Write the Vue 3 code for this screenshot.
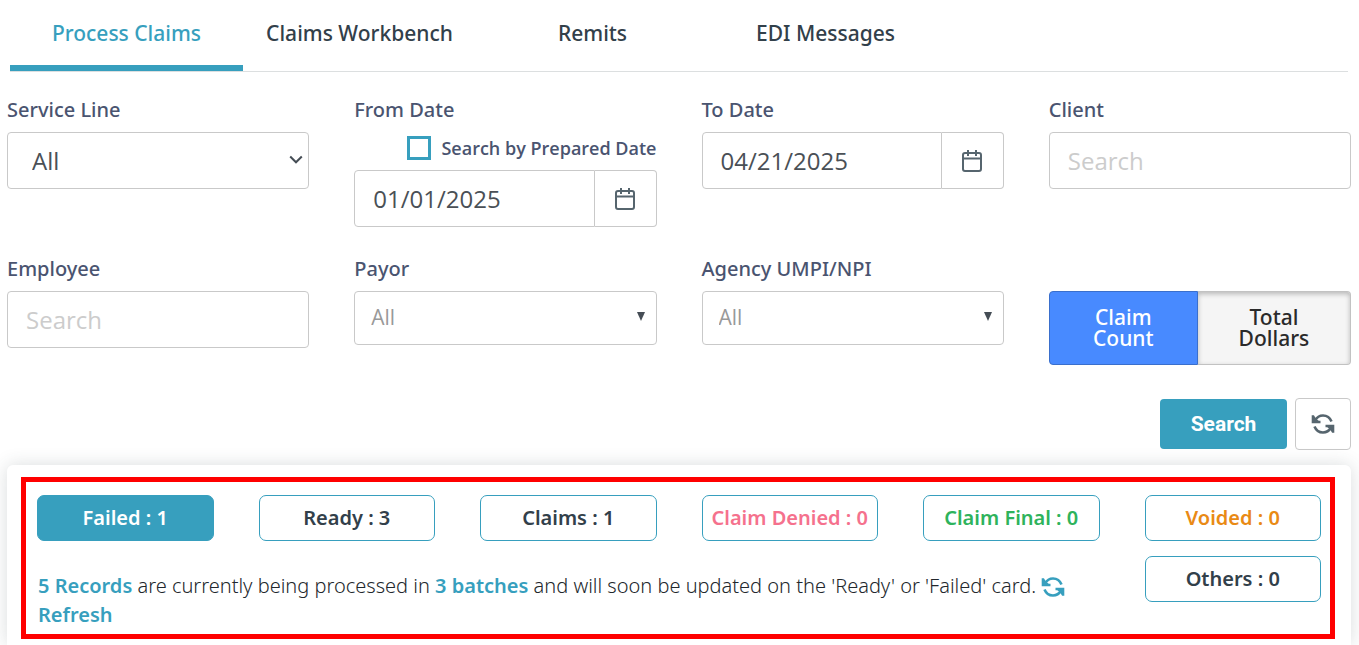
<script setup>
import { ref } from 'vue'

const tabs = ['Process Claims', 'Claims Workbench', 'Remits', 'EDI Messages']
const activeTab = ref('Process Claims')
const serviceLine = ref('All')
const byPrepared = ref(false)
const fromDate = ref('01/01/2025')
const toDate = ref('04/21/2025')
const client = ref('')
const employee = ref('')
const payor = ref('All')
const agency = ref('All')
const mode = ref('count')
const activeCard = ref('Failed')

const cards = [
  { name: 'Failed', count: 1, tone: 'dark' },
  { name: 'Ready', count: 3, tone: 'dark' },
  { name: 'Claims', count: 1, tone: 'dark' },
  { name: 'Claim Denied', count: 0, tone: 'pink' },
  { name: 'Claim Final', count: 0, tone: 'green' },
  { name: 'Voided', count: 0, tone: 'orange' },
]
</script>

<template>
  <div class="page">
    <nav class="tabs">
      <button
        v-for="tab in tabs"
        :key="tab"
        type="button"
        class="tab"
        :class="{ active: tab === activeTab }"
        @click="activeTab = tab"
      >{{ tab }}</button>
    </nav>

    <form class="filters" @submit.prevent>
      <div class="grid">
        <div class="field">
          <label for="service-line">Service Line</label>
          <div class="select-wrap">
            <select id="service-line" v-model="serviceLine" class="control large">
              <option>All</option>
            </select>
            <svg class="chevron" viewBox="0 0 14 10" aria-hidden="true">
              <path d="M1.2 1.5 7 7.3l5.800-5.800" />
            </svg>
          </div>
        </div>

        <div class="field">
          <label for="from-date">From Date</label>
          <div class="check-row">
            <input id="by-prepared" v-model="byPrepared" type="checkbox" class="check" />
            <label for="by-prepared">Search by Prepared Date</label>
          </div>
          <div class="date">
            <input id="from-date" v-model="fromDate" type="text" class="control" />
            <button type="button" class="date-button" aria-label="Pick from date">
              <svg viewBox="0 0 22 24" class="calendar" aria-hidden="true">
                <rect x="2" y="4" width="18" height="18" rx="2" />
                <path d="M2 9.500h18M7 1v6M15 1v6" />
              </svg>
            </button>
          </div>
        </div>

        <div class="field">
          <label for="to-date">To Date</label>
          <div class="date">
            <input id="to-date" v-model="toDate" type="text" class="control" />
            <button type="button" class="date-button" aria-label="Pick to date">
              <svg viewBox="0 0 22 24" class="calendar" aria-hidden="true">
                <rect x="2" y="4" width="18" height="18" rx="2" />
                <path d="M2 9.500h18M7 1v6M15 1v6" />
              </svg>
            </button>
          </div>
        </div>

        <div class="field">
          <label for="client">Client</label>
          <input id="client" v-model="client" type="text" class="control" placeholder="Search" />
        </div>

        <div class="field">
          <label for="employee">Employee</label>
          <input id="employee" v-model="employee" type="text" class="control" placeholder="Search" />
        </div>

        <div class="field">
          <label for="payor">Payor</label>
          <div class="select-wrap">
            <select id="payor" v-model="payor" class="control small">
              <option>All</option>
            </select>
            <svg class="triangle" viewBox="0 0 8 9" aria-hidden="true"><path d="M0 0h8L4 9z" /></svg>
          </div>
        </div>

        <div class="field">
          <label for="agency">Agency UMPI/NPI</label>
          <div class="select-wrap">
            <select id="agency" v-model="agency" class="control small">
              <option>All</option>
            </select>
            <svg class="triangle" viewBox="0 0 8 9" aria-hidden="true"><path d="M0 0h8L4 9z" /></svg>
          </div>
        </div>

        <div class="toggle">
          <button type="button" :class="{ on: mode === 'count' }" @click="mode = 'count'">Claim<br />Count</button>
          <button type="button" :class="{ on: mode === 'dollars' }" @click="mode = 'dollars'">Total<br />Dollars</button>
        </div>
      </div>

      <div class="actions">
        <button type="submit" class="search">Search</button>
        <button type="button" class="reset" aria-label="Reset filters">
          <svg viewBox="0 0 24 22" class="sync" aria-hidden="true">
            <path class="arc" d="M4 7.500C5.800 4.300 8.600 2.500 12 2.500c3.900 0 7 2.300 8.500 6M20 14.500c-1.800 3.200-4.600 5-8 5-3.900 0-7-2.300-8.500-6" />
            <path class="head" d="M.7 2.300h2.200l2.300 3.700 2.600 1.700h1.700v2.600H.7zM23.300 19.700h-2.200l-2.300-3.700-2.600-1.700h-1.700v-2.600h8.800z" />
          </svg>
        </button>
      </div>
    </form>

    <section class="panel">
      <div class="summary">
        <button
          v-for="card in cards"
          :key="card.name"
          type="button"
          class="card"
          :class="[card.tone, { active: card.name === activeCard }]"
          @click="activeCard = card.name"
        >{{ card.name }} : {{ card.count }}</button>

        <p class="message">
          <b>5 Records</b> are currently being processed in <b>3 batches</b> and will soon be updated on
          the 'Ready' or 'Failed' card.
          <a href="#" class="refresh"><svg viewBox="0 0 24 22" class="sync" aria-hidden="true">
            <path class="arc" d="M4 7.500C5.800 4.300 8.600 2.500 12 2.500c3.900 0 7 2.300 8.500 6M20 14.500c-1.800 3.200-4.600 5-8 5-3.900 0-7-2.300-8.500-6" />
            <path class="head" d="M.7 2.300h2.200l2.300 3.700 2.600 1.700h1.700v2.600H.7zM23.300 19.700h-2.200l-2.300-3.700-2.600-1.700h-1.700v-2.600h8.800z" />
          </svg> Refresh</a>
        </p>

        <button type="button" class="card dark" @click="activeCard = 'Others'">Others : 0</button>
      </div>
    </section>
  </div>
</template>

<style>
body {
  background: #fff;
}
</style>

<style scoped>
.page,
.page * {
  box-sizing: border-box;
}

.page {
  display: flex;
  flex-direction: column;
  min-height: 100vh;
  padding: 0 8px 0 7px;
  overflow: hidden;
  font-family: "Open Sans", "Noto Sans", sans-serif;
  color: #32404a;
}

button,
input,
select {
  margin: 0;
  font-family: inherit;
}

button {
  cursor: pointer;
}

.tabs {
  display: flex;
  height: 72px;
  margin: 0 3px;
  border-bottom: 1px solid #dcdfe0;
}

.tab {
  width: 233px;
  padding: 0;
  border: 0;
  border-bottom: 6px solid transparent;
  background: none;
  font-family: "Noto Sans", "Open Sans", sans-serif;
  font-size: 21px;
  font-weight: 500;
  line-height: 28px;
  color: #32404a;
}

.tab.active {
  border-bottom-color: #379fbe;
  color: #379fbe;
}

.filters {
  padding-top: 24px;
}

.grid {
  display: grid;
  grid-template-columns: repeat(4, minmax(0, 1fr));
  column-gap: 45px;
  row-gap: 28px;
}

.field {
  display: flex;
  flex-direction: column;
}

.field label {
  font-family: "Noto Sans", "Open Sans", sans-serif;
  font-size: 20px;
  font-weight: 500;
  line-height: 28px;
  color: #4a5470;
}

.field > label {
  margin-bottom: 8px;
}

.control {
  display: block;
  width: 100%;
  height: 57px;
  padding: 0 18px;
  border: 1px solid #c9c9c9;
  border-radius: 4px;
  outline: 0;
  background: #fff;
  font-size: 24px;
  color: #4a5056;
  appearance: none;
}

.control::placeholder {
  color: #ccc;
  opacity: 1;
}

.control.large {
  padding-left: 24px;
}

.control.small {
  height: 54px;
  padding: 0 16px 3px;
  font-size: 21px;
  color: #999;
}

.select-wrap {
  position: relative;
}

.chevron {
  position: absolute;
  top: 23px;
  right: 6px;
  width: 14px;
  height: 10px;
  fill: none;
  stroke: #454d55;
  stroke-width: 2;
}

.triangle {
  position: absolute;
  top: 21px;
  right: 12px;
  width: 8px;
  height: 9px;
  fill: #454d55;
}

.check-row {
  display: flex;
  justify-content: flex-end;
  align-items: center;
  gap: 10px;
  height: 24px;
  margin: 4px 0 10px;
}

.field .check-row label {
  font-family: "Open Sans", "Noto Sans", sans-serif;
  font-size: 18px;
  font-weight: 600;
}

.check {
  width: 24px;
  height: 24px;
  border: 3px solid #379fbe;
  background: #fff;
  appearance: none;
}

.check:checked {
  background: #379fbe;
}

.date {
  display: flex;
}

.date .control {
  flex: 1;
  min-width: 0;
  border-radius: 4px 0 0 4px;
}

.date-button {
  display: flex;
  align-items: center;
  justify-content: center;
  width: 62px;
  padding: 0;
  border: 1px solid #c9c9c9;
  border-left: 0;
  border-radius: 0 4px 4px 0;
  background: #fff;
}

.calendar {
  width: 22px;
  height: 24px;
  fill: none;
  stroke: #56656e;
  stroke-width: 2;
}

.toggle {
  display: grid;
  grid-template-columns: 149fr 153fr;
  height: 74px;
  margin-top: 36px;
}

.toggle button {
  padding: 0;
  border: 1px solid #c2c2c2;
  border-left: 0;
  border-radius: 0 4px 4px 0;
  background: #f5f5f5;
  box-shadow: inset 0 2px 5px rgba(0, 0, 0, 0.25);
  font-family: "Noto Sans", "Open Sans", sans-serif;
  font-size: 21px;
  font-weight: 500;
  line-height: 21px;
  color: #2a2a2a;
}

.toggle button:first-child {
  border-left: 1px solid #c2c2c2;
  border-radius: 4px 0 0 4px;
}

.toggle button.on {
  border-color: #3a6fcc;
  background: #488aff;
  box-shadow: none;
  color: #fff;
}

.actions {
  display: flex;
  align-items: center;
  justify-content: flex-end;
  gap: 8px;
  margin-top: 33px;
}

.search {
  width: 127px;
  height: 50px;
  padding: 0;
  border: 0;
  border-radius: 4px;
  background: #379fbe;
  font-family: Roboto, sans-serif;
  font-size: 21px;
  font-weight: 700;
  color: #fff;
}

.reset {
  display: flex;
  align-items: center;
  justify-content: center;
  width: 56px;
  height: 52px;
  padding: 0;
  border: 1px solid #c9c9c9;
  border-radius: 4px;
  background: #fff;
  color: #56656e;
}

.sync {
  width: 24px;
  height: 22px;
}

.sync .arc {
  fill: none;
  stroke: currentColor;
  stroke-width: 2.6;
}

.sync .head {
  fill: currentColor;
}

.panel {
  flex: 1;
  margin-top: 15px;
  padding: 12px 16px 6px 14px;
  border-radius: 6px 6px 0 0;
  background: #fff;
  box-shadow: 0 0 18px rgba(50, 64, 74, 0.18);
}

.summary {
  display: grid;
  grid-template-columns: repeat(6, minmax(0, 1fr));
  column-gap: 45px;
  row-gap: 15px;
  padding: 13px 9px 5px 11px;
  border: 5px solid #f00;
}

.card {
  height: 46px;
  padding: 0 0 2px;
  border: 1px solid #379fbe;
  border-radius: 7px;
  background: #fff;
  font-family: "Noto Sans", "Open Sans", sans-serif;
  font-size: 20px;
  font-weight: 600;
  white-space: nowrap;
}

.card.dark {
  color: #32404a;
}

.card.pink {
  color: #f5718d;
}

.card.green {
  color: #2eb35c;
}

.card.orange {
  color: #e98a15;
}

.card.active {
  background: #379fbe;
  color: #fff;
}

.message {
  grid-column: span 5;
  margin: 15px 0 0;
  padding-left: 1px;
  font-family: "Noto Sans", "Open Sans", sans-serif;
  font-size: 20px;
  font-weight: 300;
  line-height: 29px;
  color: #22272c;
}

.message b,
.refresh {
  font-weight: 600;
  color: #379fbe;
  text-decoration: none;
}

.refresh .sync {
  vertical-align: -5px;
}
</style>
